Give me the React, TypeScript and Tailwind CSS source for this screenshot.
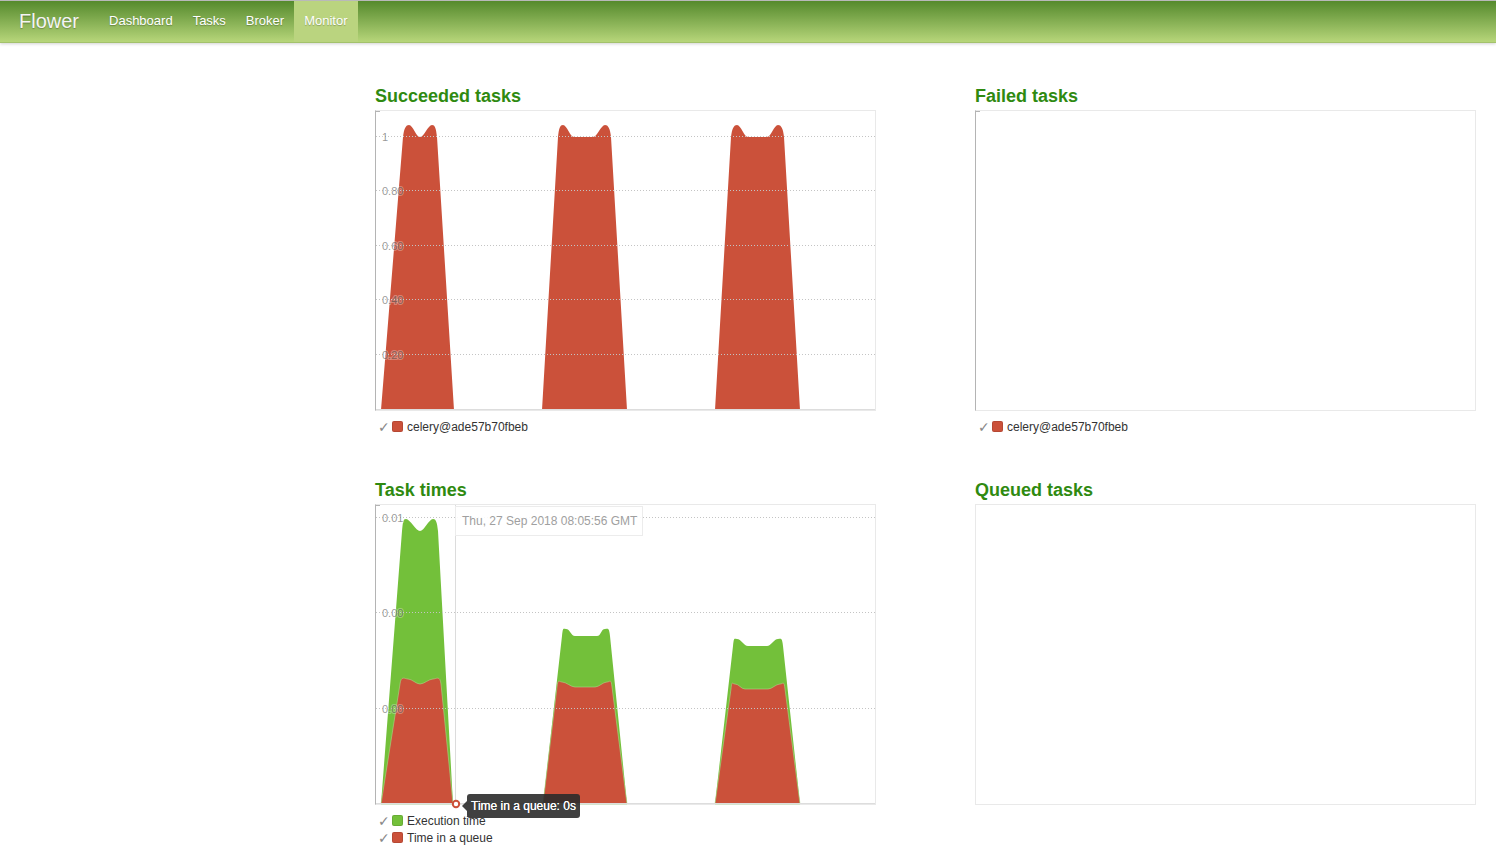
import React from "react";

const RED = "#cb513a";
const GREEN = "#73c03a";

type Bump = {
  x0: number;
  x1: number;
  sL: number;
  pL: number;
  fL: number;
  fR: number;
  pR: number;
  sR: number;
  yP: number;
  yD: number;
  yB: number;
};

// one hump of the area chart, with the two little ears on top
const bumpPath = (b: Bump) =>
  `M${b.x0},${b.yB} L${b.sL},${b.yD} ` +
  `C${b.sL + 1},${b.yD - 9} ${b.pL - 3},${b.yP} ${b.pL},${b.yP} ` +
  `C${b.pL + 4},${b.yP} ${b.fL - 4},${b.yD} ${b.fL},${b.yD} ` +
  `L${b.fR},${b.yD} ` +
  `C${b.fR + 4},${b.yD} ${b.pR - 4},${b.yP} ${b.pR},${b.yP} ` +
  `C${b.pR + 3},${b.yP} ${b.sR - 1},${b.yD - 9} ${b.sR},${b.yD} ` +
  `L${b.x1},${b.yB} Z`;

const succeeded: Bump[] = [
  { x0: 381, x1: 454, sL: 403, pL: 409, fL: 420, fR: 420, pR: 432, sR: 437, yP: 125, yD: 137, yB: 410 },
  { x0: 542, x1: 627, sL: 558, pL: 563, fL: 574, fR: 593, pR: 605, sR: 611, yP: 125, yD: 137, yB: 410 },
  { x0: 715, x1: 800, sL: 731, pL: 737, fL: 748, fR: 767, pR: 778, sR: 784, yP: 125, yD: 137, yB: 410 },
];

const execTimes: Bump[] = [
  { x0: 381, x1: 453, sL: 402, pL: 406, fL: 420, fR: 420, pR: 433, sR: 438, yP: 520, yD: 532, yB: 805 },
  { x0: 543, x1: 627, sL: 562, pL: 566, fL: 575, fR: 597, pR: 605, sR: 610, yP: 630, yD: 637, yB: 805 },
  { x0: 715, x1: 800, sL: 733, pL: 737, fL: 748, fR: 767, pR: 778, sR: 783, yP: 640, yD: 647, yB: 805 },
];

const queueTimes: Bump[] = [
  { x0: 381, x1: 453, sL: 400, pL: 408, fL: 420, fR: 420, pR: 433, sR: 441, yP: 680, yD: 685, yB: 805 },
  { x0: 543, x1: 627, sL: 557, pL: 562, fL: 575, fR: 595, pR: 607, sR: 612, yP: 683, yD: 688, yB: 805 },
  { x0: 715, x1: 800, sL: 731, pL: 735, fL: 745, fR: 768, pR: 780, sR: 785, yP: 685, yD: 690, yB: 805 },
];

const GridLine = ({ y }: { y: number }) => (
  <line x1={376} x2={875} y1={y + 0.5} y2={y + 0.5} stroke="#c4c4c4" strokeDasharray="1 2" />
);

const YLabel = ({ y, text }: { y: number; text: string }) => (
  <text
    x={382}
    y={y + 4}
    fontSize={11}
    fill="#3e3e3e"
    fillOpacity={0.55}
    stroke="#fff"
    strokeOpacity={0.3}
    strokeWidth={2}
    paintOrder="stroke"
    fontFamily="'Liberation Sans', Arial, sans-serif"
  >
    {text}
  </text>
);

const LegendItem = ({ color, label }: { color: string; label: string }) => (
  <div className="flex h-[17px] items-center">
    <span className="w-[14px] font-['DejaVu_Sans',sans-serif] text-[14px] leading-none text-[#888]">✓</span>
    <span
      className="mr-[4px] h-[11px] w-[11px] rounded-[2px] border border-black/10"
      style={{ backgroundColor: color }}
    />
    <span className="text-[12px] text-[#333]">{label}</span>
  </div>
);

const Title = ({ children }: { children: React.ReactNode }) => (
  <h2 className="mb-[4px] h-[20px] text-[18px] leading-[20px] font-bold text-[#2f8a10]">
    {children}
  </h2>
);

const ChartFrame = ({ axis, children }: { axis?: boolean; children?: React.ReactNode }) => (
  <div
    className={
      "relative h-[301px] w-[501px] border border-[#e9e9e9] " +
      (axis ? "border-l-[#b4b4b4]" : "")
    }
  >
    {axis && <div className="absolute top-0 left-0 h-px w-[4px] bg-[#b4b4b4]" />}
    {children}
  </div>
);

const SucceededChart = () => (
  <ChartFrame axis>
    <svg width={499} height={299} viewBox="376 111 499 299" className="block">
      {succeeded.map((b, i) => (
        <path key={i} d={bumpPath(b)} fill={RED} />
      ))}
      <GridLine y={136} />
      <GridLine y={190} />
      <GridLine y={245} />
      <GridLine y={299} />
      <GridLine y={354} />
      <line x1={376} x2={875} y1={409.5} y2={409.5} stroke="#ddd" />
      <YLabel y={137} text="1" />
      <YLabel y={191} text="0.80" />
      <YLabel y={246} text="0.60" />
      <YLabel y={300} text="0.40" />
      <YLabel y={355} text="0.20" />
    </svg>
  </ChartFrame>
);

const TaskTimesChart = () => (
  <ChartFrame axis>
    <svg width={499} height={299} viewBox="376 506 499 299" className="block overflow-visible">
      {execTimes.map((b, i) => (
        <path key={"g" + i} d={bumpPath(b)} fill={GREEN} />
      ))}
      {queueTimes.map((b, i) => (
        <path key={"r" + i} d={bumpPath(b)} fill={RED} stroke="#a9d98a" strokeWidth={0.6} />
      ))}
      <GridLine y={518} />
      <GridLine y={613} />
      <GridLine y={709} />
      <line x1={376} x2={875} y1={804.5} y2={804.5} stroke="#ddd" />
      <YLabel y={519} text="0.01" />
      <YLabel y={614} text="0.00" />
      <YLabel y={710} text="0.00" />
      <line x1={455.5} x2={455.5} y1={506} y2={805} stroke="#dcdcdc" />
      <circle cx={456} cy={805} r={3.2} fill="#fff" stroke={RED} strokeWidth={2} />
    </svg>
    <div className="absolute top-[1px] left-[79px] flex h-[30px] w-[188px] items-center border border-[#ececec] bg-white/90 pl-[6px] text-[12px] text-[#a0a0a0]">
      Thu, 27 Sep 2018 08:05:56 GMT
    </div>
    <div className="absolute top-[289px] left-[91px] flex h-[24px] items-center rounded-[3px] bg-[#2b2b2b]/90 px-[4px] text-[12px] text-white [text-shadow:0_0_0.4px_#fff]">
      <span className="absolute top-[7px] left-[-5px] h-0 w-0 border-y-[5px] border-r-[5px] border-y-transparent border-r-[#2b2b2b]/90" />
      Time in a queue: 0s
    </div>
  </ChartFrame>
);

export default function App() {
  return (
    <div className="min-h-screen bg-white font-['Liberation_Sans',Arial,sans-serif]">
      <nav className="flex h-[43px] items-stretch border-t border-b border-t-[#b9b9b9] border-b-[#a3c26c] bg-linear-to-b from-[#558a2c] to-[#b7d67a] pl-[19px] shadow-[0_1px_3px_rgba(0,0,0,0.18)]">
        <a className="mr-[20px] flex items-center pb-[2px] text-[20px] text-[#f4f4f4] [text-shadow:0_1px_1px_rgba(0,0,0,0.25)]">
          Flower
        </a>
        {["Dashboard", "Tasks", "Broker", "Monitor"].map((item) => (
          <a
            key={item}
            className={
              "flex items-center px-[10px] pb-[2px] text-[13px] text-white [text-shadow:0_1px_1px_rgba(0,0,0,0.25)] " +
              (item === "Monitor" ? "bg-[#bad47f]" : "")
            }
          >
            {item}
          </a>
        ))}
      </nav>

      <main className="grid grid-cols-[501px_501px] gap-x-[99px] gap-y-[45px] pt-[43px] pl-[375px]">
        <section>
          <Title>Succeeded tasks</Title>
          <SucceededChart />
          <div className="mt-[7px] pl-[3px]">
            <LegendItem color={RED} label="celery@ade57b70fbeb" />
          </div>
        </section>

        <section>
          <Title>Failed tasks</Title>
          <ChartFrame axis />
          <div className="mt-[7px] pl-[3px]">
            <LegendItem color={RED} label="celery@ade57b70fbeb" />
          </div>
        </section>

        <section>
          <Title>Task times</Title>
          <TaskTimesChart />
          <div className="mt-[7px] pl-[3px]">
            <LegendItem color={GREEN} label="Execution time" />
            <LegendItem color={RED} label="Time in a queue" />
          </div>
        </section>

        <section>
          <Title>Queued tasks</Title>
          <ChartFrame />
        </section>
      </main>
    </div>
  );
}
